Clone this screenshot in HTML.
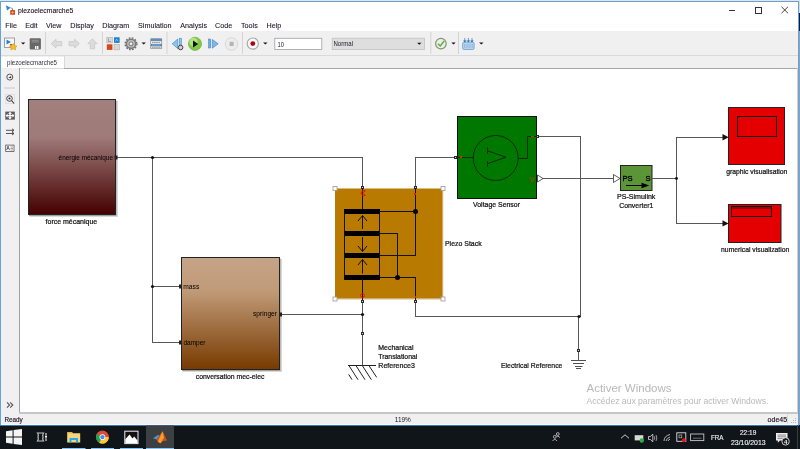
<!DOCTYPE html>
<html><head><meta charset="utf-8">
<style>
html,body{margin:0;padding:0;}
body{width:800px;height:449px;overflow:hidden;position:relative;background:#fff;font-family:"Liberation Sans",sans-serif;}
svg{position:absolute;left:0;top:0;will-change:transform;}
text{font-family:"Liberation Sans",sans-serif;}
</style></head>
<body>
<svg width="800" height="449" viewBox="0 0 800 449" shape-rendering="crispEdges">
<defs>
<linearGradient id="gForce" x1="0" y1="0" x2="0" y2="1">
<stop offset="0" stop-color="#a2807e"/><stop offset="0.33" stop-color="#9e7a78"/><stop offset="1" stop-color="#440000"/>
</linearGradient>
<linearGradient id="gConv" x1="0" y1="0" x2="0" y2="1">
<stop offset="0" stop-color="#c6a488"/><stop offset="0.3" stop-color="#c09a78"/><stop offset="1" stop-color="#783a00"/>
</linearGradient>
</defs>

<!-- ===== window chrome ===== -->
<rect x="0" y="0" width="800" height="1" fill="#e6e3e0"/>
<rect x="799" y="1" width="1" height="12" fill="#d8d8d8"/>
<rect x="799" y="13" width="1" height="18" fill="#0c1a3c"/><rect x="799" y="31" width="1" height="394" fill="#98a0a8"/>
<rect x="0" y="1" width="799" height="1" fill="#62a2de"/>
<rect x="0" y="1" width="1" height="425" fill="#62a2de"/>
<rect x="798" y="1" width="1" height="425" fill="#62a2de"/>
<!-- title bar -->
<rect x="1" y="2" width="797" height="15" fill="#ffffff"/>
<text x="18" y="13" font-size="7.8" fill="#1a1028" stroke="#1a1028" stroke-width="0.12" textLength="55.2" lengthAdjust="spacingAndGlyphs">piezoelecmarche5</text>
<!-- window controls -->
<rect x="728.5" y="9.5" width="6" height="1" fill="#333"/>
<rect x="755" y="7" width="6" height="6" fill="none" stroke="#333" stroke-width="1"/>
<path d="M781.5 6.8 L788 13.2 M788 6.8 L781.5 13.2" stroke="#333" stroke-width="0.9" shape-rendering="geometricPrecision"/>
<!-- title icon -->
<g shape-rendering="geometricPrecision">
<path d="M6 5.2 L10.6 7.8 L7 10.5 Z" fill="#2a86d4"/>
<path d="M10.5 7.8 L12.5 8.5 V10" stroke="#777" stroke-width="0.8" fill="none"/>
<rect x="10.2" y="10" width="4.8" height="4.8" rx="0.6" fill="#d4481a"/>
<path d="M11.4 12.4 H13.8 M12.6 11.2 V13.6" stroke="#f8c8a0" stroke-width="0.7"/>
</g>
<!-- menu bar -->
<g font-size="7.2" fill="#1a1028" stroke="#1a1028" stroke-width="0.08">
<text x="5.3" y="28">File</text>
<text x="25.2" y="28">Edit</text>
<text x="46" y="28">View</text>
<text x="70.2" y="28">Display</text>
<text x="102.2" y="28">Diagram</text>
<text x="138" y="28">Simulation</text>
<text x="180.3" y="28">Analysis</text>
<text x="215" y="28">Code</text>
<text x="241" y="28">Tools</text>
<text x="266.5" y="28">Help</text>
</g>
<!-- toolbar -->
<rect x="1" y="31" width="797" height="24" fill="#f0f0f0"/>
<rect x="1" y="55" width="797" height="1" fill="#dadada"/>

<!-- toolbar icons -->
<g shape-rendering="geometricPrecision">
<!-- new model -->
<rect x="4.5" y="38" width="10" height="9.5" fill="#f8f8f8" stroke="#8a8a8a" stroke-width="0.8"/>
<path d="M6.5 39.5 L11 42 L6.5 44.5 Z" fill="#2a80d0"/>
<rect x="10" y="44" width="2" height="1.5" fill="#d04818"/>
<path d="M13.2 43.5 L15 45.8 L17 46.2 L15.3 47.7 L15.6 50 L13.2 48.8 L10.8 50 L11.2 47.7 L9.5 46.2 L11.5 45.8 Z" fill="#f2c028" stroke="#c89000" stroke-width="0.5"/>
<path d="M21 42.5 H25.3 L23.15 44.5 Z" fill="#111"/>
<!-- save -->
<rect x="29.7" y="38.2" width="11.2" height="11.3" rx="1" fill="#686868"/>
<rect x="31.5" y="39.5" width="7.5" height="3.5" fill="#7a7a7a"/>
<rect x="32" y="40.5" width="6.5" height="0.8" fill="#9a9a9a"/>
<rect x="35" y="46" width="1.5" height="3" fill="#f4f4f4"/>
<rect x="37" y="46" width="1.5" height="3" fill="#f4f4f4"/>
<!-- separators -->
<rect x="45" y="32" width="1" height="22" fill="#d4d4d4"/>
<rect x="102" y="32" width="1" height="22" fill="#d4d4d4"/>
<rect x="166.5" y="32" width="1" height="22" fill="#d4d4d4"/>
<rect x="242" y="32" width="1" height="22" fill="#d4d4d4"/>
<rect x="430.3" y="32" width="1" height="22" fill="#d4d4d4"/>
<rect x="458" y="32" width="1" height="22" fill="#d4d4d4"/>
<!-- back / fwd / up -->
<path d="M51.2 43.6 L56 39.2 V41.5 H61.8 V45.8 H56 V48 Z" fill="#dcdcdc" stroke="#c4c4c4" stroke-width="0.7"/>
<path d="M79.4 43.6 L74.6 39.2 V41.5 H69 V45.8 H74.6 V48 Z" fill="#dcdcdc" stroke="#c4c4c4" stroke-width="0.7"/>
<path d="M92.4 38.8 L97 43.6 H94.6 V48.8 H90.2 V43.6 H87.8 Z" fill="#dcdcdc" stroke="#c4c4c4" stroke-width="0.7"/>
<!-- library browser -->
<rect x="106.8" y="37.3" width="5.6" height="5.6" fill="#d8d8d8" stroke="#a8a8a8" stroke-width="0.5"/>
<rect x="114" y="37.3" width="5.6" height="5.6" fill="#1f7ec8"/>
<rect x="106.8" y="44.3" width="5.6" height="5.6" fill="#d4481a"/>
<rect x="114" y="44.3" width="5.6" height="5.6" fill="#d8d8d8" stroke="#a8a8a8" stroke-width="0.5"/>
<path d="M108.5 38.5 V41.5 H111" stroke="#777" stroke-width="0.6" fill="none"/>
<path d="M115.5 41.5 L116.5 39 L118 41" stroke="#cfe4f6" stroke-width="0.6" fill="none"/>
<!-- gear -->
<circle cx="131" cy="43.8" r="5.4" fill="#7a7a7a"/>
<circle cx="131" cy="43.8" r="5.9" fill="none" stroke="#6a6a6a" stroke-width="1.3" stroke-dasharray="1.7 1.4"/>
<circle cx="131" cy="43.8" r="3.8" fill="#c4c4c4"/>
<circle cx="131" cy="43.8" r="2.6" fill="#8a8a8a"/>
<circle cx="131" cy="43.8" r="1.3" fill="#f4f4f4"/>
<path d="M141.5 42.5 H145.9 L143.7 44.5 Z" fill="#111"/>
<!-- model explorer -->
<rect x="150.3" y="38.2" width="11.8" height="10.8" rx="0.8" fill="#8a8a8a"/>
<rect x="151" y="39" width="10.4" height="1.8" fill="#5a90c8"/>
<rect x="151" y="41.2" width="10.4" height="2.6" fill="#f4f6f8"/>
<rect x="151" y="44" width="10.4" height="2" fill="#4a88c8"/>
<rect x="151" y="46.2" width="10.4" height="2.2" fill="#d8dadc"/>
<path d="M152 42.5 H160.5" stroke="#555" stroke-width="0.6" stroke-dasharray="1.6 0.5"/>
<path d="M152 45 H160.5" stroke="#d8e8f8" stroke-width="0.5" stroke-dasharray="1.6 0.5"/>
<path d="M152 47.3 H160.5" stroke="#777" stroke-width="0.6" stroke-dasharray="1.6 0.5"/>
<!-- step back -->
<path d="M172.2 43.8 L177.8 39 V48.6 Z" fill="#8cc4ec" stroke="#3a80c0" stroke-width="0.6"/>
<rect x="179.4" y="38.2" width="2" height="7.8" fill="#8cc4ec" stroke="#3a80c0" stroke-width="0.5"/>
<circle cx="180.6" cy="47.5" r="2.3" fill="#d0d0d0" stroke="#333" stroke-width="0.9"/>
<!-- run -->
<circle cx="195" cy="43.8" r="6.6" fill="#84c848" stroke="#62a838" stroke-width="0.6"/>
<circle cx="193.5" cy="42" r="4.2" fill="#c8ec9a" opacity="0.7"/>
<path d="M193 40.5 L198.2 43.9 L193 47.5 Z" fill="#111"/>
<!-- step fwd -->
<rect x="208.5" y="39" width="2.2" height="9" fill="#6aaee0" stroke="#3a80c0" stroke-width="0.5"/>
<path d="M212.3 39.5 L218.2 43.8 L212.3 48.2 Z" fill="#7ab8e8" stroke="#3a80c0" stroke-width="0.6"/>
<!-- stop -->
<circle cx="231.5" cy="44" r="6.3" fill="#ececec" stroke="#d2d2d2" stroke-width="0.8"/>
<rect x="229.6" y="41.8" width="4" height="4.2" fill="#b4b4b4"/>
<!-- record -->
<circle cx="252.8" cy="43.6" r="5.6" fill="#fafafa" stroke="#a8a8a8" stroke-width="1.2"/>
<circle cx="252.8" cy="43.6" r="2.4" fill="#b00010"/>
<path d="M263.1 42.5 H267.5 L265.3 44.5 Z" fill="#111"/>
<!-- stop time box -->
<rect x="274.8" y="38.3" width="47" height="11.2" fill="#ffffff" stroke="#a0a0a0" stroke-width="0.8"/>
<text x="277.5" y="46.8" font-size="6.6" fill="#202040" textLength="6.5" lengthAdjust="spacingAndGlyphs">10</text>
<!-- mode combo -->
<rect x="332.2" y="38.2" width="92.2" height="11.4" fill="#dedede" stroke="#c2c2c2" stroke-width="0.8"/>
<text x="333.5" y="46.4" font-size="6.6" fill="#202030" textLength="19.5" lengthAdjust="spacingAndGlyphs">Normal</text>
<path d="M417.1 42.8 H421.5 L419.3 44.8 Z" fill="#111"/>
<!-- check -->
<circle cx="440.9" cy="43.6" r="5.3" fill="#ececec" stroke="#7c9868" stroke-width="1.2"/>
<path d="M438 43.8 L440.2 46 L444.2 41" stroke="#5cac38" stroke-width="1.4" fill="none"/>
<path d="M451.3 42.6 H455.7 L453.5 44.6 Z" fill="#111"/>
<!-- sim data -->
<rect x="462.6" y="42.2" width="11.6" height="7.3" rx="1.5" fill="#b6d4f0" stroke="#4a88c8" stroke-width="0.6"/>
<path d="M464 45 H473 M464 47 H473" stroke="#4a80b8" stroke-width="0.5" stroke-dasharray="1 0.6"/>
<path d="M464.8 38 V42 M468.4 38 V42 M472 38 V42" stroke="#3a70b0" stroke-width="0.7"/>
<path d="M463.5 40.5 L464.8 42.2 L466.1 40.5 M467.1 40.5 L468.4 42.2 L469.7 40.5 M470.7 40.5 L472 42.2 L473.3 40.5" fill="#2a68b0" stroke="#2a68b0" stroke-width="0.5"/>
<path d="M479.1 42.6 H483.5 L481.3 44.6 Z" fill="#111"/>
</g>
<!-- tab strip -->
<rect x="1" y="56" width="797" height="12" fill="#f0f0f0"/>
<rect x="1" y="57" width="63" height="11" fill="#ffffff"/>
<rect x="64" y="56" width="1" height="12" fill="#d8d8d8"/>
<text x="7" y="65" font-size="6.6" fill="#303040" textLength="50" lengthAdjust="spacingAndGlyphs">piezoelecmarche5</text>
<!-- left palette -->
<rect x="1" y="68" width="18" height="345" fill="#f0f0f0"/>
<!-- palette icons -->
<g shape-rendering="geometricPrecision">
<circle cx="9.8" cy="77.1" r="3" fill="#f4f4f4" stroke="#555" stroke-width="1"/>
<path d="M8.3 77.8 L11.2 75.9 V78.3 Z" fill="#333"/>
<rect x="4" y="87.5" width="11" height="1" fill="#c8c8c8"/>
<rect x="5.5" y="94.5" width="9" height="9" fill="none" stroke="#bbb" stroke-width="0.6" stroke-dasharray="1 1"/>
<circle cx="9.5" cy="98.5" r="2.8" fill="none" stroke="#333" stroke-width="0.9"/>
<circle cx="9.5" cy="98.5" r="1" fill="#222"/>
<path d="M11.5 100.5 L14 103.5" stroke="#333" stroke-width="1.1"/>
<rect x="5.3" y="111.6" width="9.5" height="8" fill="#5a5a5a"/>
<path d="M10 112.5 V118.8 M6.2 115.6 H13.8" stroke="#fff" stroke-width="1.3"/>
<path d="M8.5 114 L10 112.3 L11.5 114 M8.5 117.2 L10 118.9 L11.5 117.2 M7.6 114.1 L6 115.6 L7.6 117.1 M12.4 114.1 L14 115.6 L12.4 117.1" fill="#fff" stroke="#fff" stroke-width="0.6"/>
<path d="M6 130.3 H14 M6 133.5 H14 M12 128.8 L14 130.3 L12 131.8 M12 132 L14 133.5 L12 135" stroke="#444" stroke-width="0.9" fill="none"/>
<rect x="5.7" y="145.1" width="8.3" height="6.4" fill="#f8f8f8" stroke="#555" stroke-width="0.8"/>
<text x="6.3" y="150.3" font-size="5" font-weight="bold" fill="#333">A</text>
<path d="M10.5 147 H13 M10.5 148.5 H13 M10.5 150 H13" stroke="#555" stroke-width="0.5"/>
<path d="M7 402.3 L9.6 405 L7 407.7 M10.2 402.3 L12.8 405 L10.2 407.7" fill="none" stroke="#555" stroke-width="1.1"/>
</g>

<!-- canvas -->
<rect x="19" y="68" width="779" height="345" fill="#ffffff"/>
<rect x="64" y="68" width="734" height="1" fill="#a8a8a8"/><rect x="19" y="68" width="45" height="1" fill="#d8d8d8"/>
<rect x="19" y="68" width="1" height="345" fill="#a0a0a0"/>
<!-- status bar -->
<rect x="1" y="413" width="797" height="12" fill="#f0f0f0"/>
<rect x="19" y="412" width="779" height="2" fill="#c6c6ca"/>
<rect x="797" y="68" width="1" height="345" fill="#d0d0d4"/>
<rect x="787" y="414" width="1" height="10" fill="#dadada"/>
<rect x="1" y="424" width="797" height="1" fill="#fafafa"/>
<text x="4.4" y="421.5" font-size="7.2" fill="#1a1020" stroke="#1a1020" stroke-width="0.15" textLength="18.4" lengthAdjust="spacingAndGlyphs">Ready</text>
<text x="394.8" y="421.7" font-size="7" fill="#1a1020" textLength="16" lengthAdjust="spacingAndGlyphs">119%</text>
<text x="767.6" y="421.7" font-size="7.2" fill="#1a1020" stroke="#1a1020" stroke-width="0.15" textLength="19.6" lengthAdjust="spacingAndGlyphs">ode45</text>
<g fill="#b8b8b8"><rect x="795" y="418" width="1" height="1"/><rect x="793" y="420" width="1" height="1"/><rect x="795" y="420" width="1" height="1"/><rect x="791" y="422" width="1" height="1"/><rect x="793" y="422" width="1" height="1"/><rect x="795" y="422" width="1" height="1"/></g>
<!-- taskbar -->
<rect x="0" y="425" width="800" height="24" fill="#101519"/>
<rect x="0" y="425" width="799" height="1" fill="#3a78b8"/>
<g shape-rendering="geometricPrecision">
<!-- start -->
<path d="M6 431.2 L12.6 430.3 V436.5 H6 Z M13.6 430.1 L22 428.9 V436.5 H13.6 Z M6 437.5 H12.6 V443.7 L6 442.8 Z M13.6 437.5 H22 V445 L13.6 443.9 Z" fill="#f4f4f4"/>
<!-- task view -->
<path d="M37.5 433 Q39 435 38 437 Q39 439 37.5 441 H43.5 Q42.2 439 43 437 Q42.2 435 43.5 433 Z" fill="none" stroke="#c4c4c4" stroke-width="1.2"/>
<rect x="45" y="433" width="2" height="2" fill="#888"/>
<rect x="45" y="435.6" width="2" height="2" fill="#f4f4f4"/>
<rect x="45" y="438.2" width="2" height="2.8" fill="#888"/>
<!-- app highlight -->
<rect x="146" y="425.5" width="28" height="23.5" fill="#3d4043"/>
<rect x="62" y="448" width="23.5" height="1" fill="#86c4f2"/>
<rect x="91" y="448" width="23" height="1" fill="#86c4f2"/>
<rect x="120" y="448" width="23" height="1" fill="#86c4f2"/>
<rect x="146" y="448" width="28" height="1" fill="#86c4f2"/>
<!-- explorer -->
<path d="M67.2 432.2 H72 L73 433.2 H80.2 V442.4 H67.2 Z" fill="#f6d67a"/>
<path d="M67.2 432.2 H72 L73 433.5 H67.2 Z" fill="#e8b84a"/>
<path d="M69.5 438 H78 V442.4 H76 V440 H71.5 V442.4 H69.5 Z" fill="#2aa8f0"/>
<!-- chrome -->
<circle cx="102.4" cy="437.1" r="6.5" fill="#dd4b39"/>
<path d="M102.4 437.1 L96.8 433.9 A6.5 6.5 0 0 0 99.2 442.8 Z" fill="#1da354"/>
<path d="M102.4 437.1 L99.2 442.8 A6.5 6.5 0 0 0 108.9 437.1 Z" fill="#fcc934"/>
<circle cx="102.4" cy="437.1" r="2.9" fill="#fff"/>
<circle cx="102.4" cy="437.1" r="2.2" fill="#4a8af4"/>
<!-- photos -->
<rect x="124.8" y="431.2" width="13.2" height="12.4" fill="#111" stroke="#f0f0f0" stroke-width="1"/>
<path d="M125.3 443.1 V439.2 L129.5 434.6 L132.5 438.5 L134.2 436.5 L137.5 440.5 V443.1 Z" fill="#fff"/>
<!-- matlab -->
<path d="M153 438.2 L158.2 434.8 L160.2 437 L156.5 439.4 Z" fill="#3c9ad8"/>
<path d="M156.5 439.4 L162.6 431.3 L167 440.5 L163.2 441 L160.2 443.6 L157.8 441.7 Z" fill="#d24e1e"/>
<path d="M162.6 431.3 L164 437.5 L160.5 443.2 L157.8 441.7 Z" fill="#f4a028"/>
<!-- people -->
<g fill="none" stroke="#d0d0d0" stroke-width="0.8">
<circle cx="554.8" cy="436.8" r="1.4"/><path d="M552.5 441 Q554.8 437.8 557 441"/>
<circle cx="557.8" cy="434" r="1.4"/><path d="M556.4 436.2 Q557.8 435.5 560 437.5"/>
</g>
<!-- tray -->
<path d="M621 438.3 L625 434.8 L629 438.3" fill="none" stroke="#e0e0e0" stroke-width="0.9"/>
<rect x="634.7" y="435.2" width="8.6" height="5.2" fill="#d8d8d8"/>
<circle cx="641.8" cy="440.5" r="2.2" fill="#2ab040"/>
<path d="M648.5 436.5 H650.3 L652.8 434.2 V441.8 L650.3 439.5 H648.5 Z" fill="none" stroke="#e0e0e0" stroke-width="0.8"/>
<path d="M654.3 436.3 Q655.3 438 654.3 439.7 M656 435 Q657.6 438 656 441" fill="none" stroke="#d0d0d0" stroke-width="0.7"/>
<path d="M664 441 Q664 436 670 434.5 M666 441 Q666.5 438 670 437 M668 441 Q668.5 439.5 670 439.3" fill="none" stroke="#d8d8d8" stroke-width="0.8"/>
<rect x="676.8" y="432.8" width="9" height="8.5" fill="none" stroke="#e0e0e0" stroke-width="0.9"/>
<rect x="679" y="435" width="2.8" height="2.8" fill="none" stroke="#ccc" stroke-width="0.6"/>
<circle cx="683.8" cy="440.3" r="2" fill="#e8101c"/>
<rect x="690.6" y="434" width="13.2" height="6.6" fill="none" stroke="#c8c8c8" stroke-width="0.9"/>
<path d="M693 438.2 H701.5" stroke="#999" stroke-width="0.7"/>
<!-- notifications -->
<path d="M776 433 H787.5 V440.5 H780 L777.8 442.8 V440.5 H776 Z" fill="#f0f0f0"/>
<path d="M777.5 435 H786 M777.5 436.8 H786 M777.5 438.6 H783" stroke="#444" stroke-width="0.6"/>
<circle cx="785.6" cy="441.4" r="3.7" fill="#1a1a1a" stroke="#d8d8d8" stroke-width="0.9"/>
<text x="783.9" y="443.8" font-size="6" font-weight="bold" fill="#f4f4f4">4</text>
<rect x="797" y="425" width="1" height="24" fill="#3a3e44"/>
</g>
<g fill="#f0f0f0" stroke="#f0f0f0" stroke-width="0.15">
<text x="711" y="440.2" font-size="7.2" textLength="12.5" lengthAdjust="spacingAndGlyphs">FRA</text>
<text x="740" y="435" font-size="7.2" textLength="16.3" lengthAdjust="spacingAndGlyphs">22:19</text>
<text x="731" y="445.3" font-size="7.2" textLength="34.6" lengthAdjust="spacingAndGlyphs">23/10/2013</text>
</g>

<!-- ===== diagram ===== -->
<g shape-rendering="geometricPrecision">
<!-- force block -->
<rect x="29.5" y="101" width="88.5" height="116" fill="#d8d8d8"/><rect x="29" y="100.5" width="87.5" height="115.5" fill="#a0a0a0"/>
<rect x="28.5" y="99.5" width="87" height="115" fill="url(#gForce)" stroke="#222" stroke-width="1"/>
<!-- conv block -->
<rect x="182.5" y="259" width="99.5" height="113" fill="#d8d8d8"/><rect x="182" y="258.5" width="98.5" height="112.5" fill="#a0a0a0"/>
<rect x="181.5" y="257.5" width="98" height="112" fill="url(#gConv)" stroke="#222" stroke-width="1"/>
<!-- piezo block -->
<rect x="335.5" y="189" width="108" height="111" fill="#e8dcc8"/>
<rect x="335" y="188.5" width="107.5" height="110" fill="#b87a00"/>
<!-- voltage sensor -->
<rect x="457.5" y="116.5" width="79" height="82" fill="#007800" stroke="#111" stroke-width="1"/>
<!-- PS converter -->
<rect x="620.5" y="165.5" width="31.5" height="25" fill="#5c9438" stroke="#222" stroke-width="1"/>
<!-- scopes -->
<rect x="728.5" y="107.5" width="56" height="57" fill="#e40000" stroke="#222" stroke-width="1"/>
<rect x="728.5" y="204.5" width="52.5" height="38" fill="#e40000" stroke="#222" stroke-width="1"/>
</g>


<!-- connection lines -->
<g fill="none" stroke="#585858" stroke-width="1">
<path d="M116 157.5 H362.5 V187"/>
<path d="M152.5 157.5 V342.5 H181"/>
<path d="M152.5 286.5 H181"/>
<path d="M280 314.5 H362.5"/>
<path d="M362.5 301 V365"/>
<path d="M415.5 187 V157.5 H456"/>
<path d="M415.5 301 V316.5 H578.5 V349"/>
<path d="M537 136.5 H580.5 V316.5"/>
<path d="M540 178.5 H613"/>
<path d="M652 178.5 H676.5 V137.5 H723"/>
<path d="M676.5 178.5 V223.5 H723"/>
</g>
<g fill="#111" shape-rendering="geometricPrecision">
<circle cx="152.5" cy="157.5" r="1.6"/>
<circle cx="152.5" cy="286.5" r="1.6"/>
<circle cx="362.5" cy="314.5" r="1.6"/>
<circle cx="579" cy="316.5" r="1.6"/>
<circle cx="676.5" cy="178.5" r="1.4"/>
<path d="M722.5 134 L728.6 137.2 L722.5 140.4 Z"/>
<path d="M722.5 220.2 L728.6 223.4 L722.5 226.6 Z"/>
</g>
<!-- port markers -->
<g fill="#222" shape-rendering="geometricPrecision">
<rect x="114.5" y="155.5" width="3" height="4"/>
<rect x="179" y="284.5" width="3" height="4"/>
<rect x="179" y="340.5" width="3" height="4"/>
<rect x="279" y="312.5" width="3" height="4"/>
</g>
<g fill="#d8d8d8" stroke="#2a2a2a" stroke-width="1" shape-rendering="crispEdges">
<rect x="361.5" y="186" width="2" height="2.5"/>
<rect x="414.5" y="186" width="2" height="2.5"/>
<rect x="361.5" y="300" width="2" height="2.5"/>
<rect x="414.5" y="300" width="2" height="2.5"/>
<rect x="361.5" y="332" width="2" height="2"/>
<rect x="577.5" y="349.5" width="2" height="2"/>
<rect x="454.5" y="156.5" width="2" height="2"/>
<rect x="536.5" y="135.5" width="2" height="2"/>
</g>
<!-- selection handles -->
<g fill="#fff" stroke="#999" stroke-width="0.8" shape-rendering="geometricPrecision">
<rect x="333" y="186.5" width="4" height="4"/>
<rect x="441" y="186.5" width="4" height="4"/>
<rect x="333" y="297" width="4" height="4"/>
<rect x="441" y="297" width="4" height="4"/>
</g>
<!-- piezo internals -->
<g fill="#000">
<rect x="344" y="209" width="36" height="4.5"/>
<rect x="344" y="231" width="36" height="4.5"/>
<rect x="344" y="253" width="36" height="4.5"/>
<rect x="344" y="275" width="36" height="4.5"/>
</g>
<g fill="none" stroke="#111" stroke-width="1">
<path d="M344.5 213 V275 M379.5 213 V275"/>
<path d="M362.5 188 V209 M362.5 279 V300"/>
<path d="M380 211.5 H415.5 M415.5 188 V255.5 H380"/>
<path d="M380 233.5 H397.5 V277.5 H380 M397.5 277.5 H415.5 V300"/>
<path d="M362.5 215.5 V229 M358 221 L362.5 215.5 L367 221" shape-rendering="geometricPrecision"/>
<path d="M362.5 237 V251.5 M358 246 L362.5 251.5 L367 246" shape-rendering="geometricPrecision"/>
<path d="M362.5 259.5 V273.5 M358 265 L362.5 259.5 L367 265" shape-rendering="geometricPrecision"/>
</g>
<g fill="#000" shape-rendering="geometricPrecision">
<circle cx="415.5" cy="211.5" r="2.5"/>
<circle cx="397.5" cy="277.5" r="2.5"/>
</g>
<g fill="none" stroke="#e81800" stroke-width="1" shape-rendering="geometricPrecision">
<path d="M365.3 191 A2.6 2.6 0 1 0 365.3 195.3 M362.5 193 L365.5 190.8 M362.5 193 L365.5 195.5"/>
<ellipse cx="362.5" cy="295.5" rx="2" ry="1.8"/>
</g>
<g fill="#e02000"><rect x="414" y="193" width="2" height="1.5"/><rect x="414.5" y="296" width="1.5" height="1.5"/></g>
<!-- voltage sensor internals -->
<g fill="none" stroke="#0a2a0a" stroke-width="1" shape-rendering="geometricPrecision">
<circle cx="495.7" cy="158" r="22.5"/>
<path d="M457 157.5 H473.2"/>
<path d="M518.2 158.5 H527.5 V136.5 H537"/>
<path d="M487.5 147.2 V153.6 M487.5 161.3 V166.9 M487.5 150.8 L506 157.2 L487.5 163.7"/>
</g>
<rect x="459.5" y="156" width="2" height="2" fill="#d03000"/>
<rect x="531" y="135.5" width="3" height="1" fill="#d03000"/>
<text x="530" y="181.8" font-size="7" fill="#e03010">V</text>
<path d="M537.5 175 L543 178.5 L537.5 182 Z" fill="#fff" stroke="#333" stroke-width="0.8" shape-rendering="geometricPrecision"/>
<!-- PS converter internals -->
<path d="M613.5 174.5 L620 178.5 L613.5 182.5 Z" fill="#fff" stroke="#333" stroke-width="0.8" shape-rendering="geometricPrecision"/>
<text x="622.4" y="180.6" font-size="7.6" fill="#000" stroke="#000" stroke-width="0.3">PS</text>
<text x="645.4" y="180.6" font-size="7.6" fill="#000" stroke="#000" stroke-width="0.3">S</text>
<path d="M625.7 185.5 H643" stroke="#000" stroke-width="1"/>
<path d="M641.5 182.8 L649.3 185.5 L641.5 188.2 Z" fill="#000" shape-rendering="geometricPrecision"/>
<!-- scope internals -->
<rect x="737.5" y="116.5" width="39" height="20" fill="none" stroke="#111" stroke-width="1"/>
<rect x="731.5" y="206.5" width="39.5" height="10" fill="#e40000" stroke="#111" stroke-width="1"/>
<rect x="732" y="207" width="38.5" height="1.5" fill="#a00000"/>
<!-- ground symbols -->
<g fill="none" stroke="#222" stroke-width="1" shape-rendering="geometricPrecision">
<path d="M348 365.5 H376"/>
<path d="M349 365.7 L358 379.7 M356 365.7 L365 379.7 M362.4 365.7 L371.4 379.7 M369 365.7 L376.7 377.4 M348.7 374.4 L352 379.7"/>
<path d="M578.5 352 V360.5" stroke="#585858"/><path d="M571 360.5 H586 M573 363.5 H584 M575 366.5 H582.5 M576 368.5 H581" stroke="#505050"/>
</g>

<g font-size="6.6" fill="#000">
<text x="58.6" y="159.6" textLength="54.4" lengthAdjust="spacingAndGlyphs">énergie mécanique</text>
<text x="183.3" y="288.8" textLength="16" lengthAdjust="spacingAndGlyphs">mass</text>
<text x="183.5" y="344.5" textLength="22" lengthAdjust="spacingAndGlyphs">damper</text>
<text x="253" y="316.3" textLength="24" lengthAdjust="spacingAndGlyphs">springer</text>
</g>
<!-- labels -->
<g font-size="7.2" fill="#111" stroke="#111" stroke-width="0.22">
<text x="45.6" y="223.8" textLength="51.6" lengthAdjust="spacingAndGlyphs">force mécanique</text>
<text x="195.8" y="378.6" textLength="68.6" lengthAdjust="spacingAndGlyphs">conversation mec-elec</text>
<text x="445" y="246.1" textLength="36.6" lengthAdjust="spacingAndGlyphs">Piezo Stack</text>
<text x="473" y="207.3" textLength="47" lengthAdjust="spacingAndGlyphs">Voltage Sensor</text>
<text x="617" y="199.3" textLength="38.4" lengthAdjust="spacingAndGlyphs">PS-Simulink</text>
<text x="619.2" y="207.9" textLength="34.2" lengthAdjust="spacingAndGlyphs">Converter1</text>
<text x="726.2" y="173.5" textLength="61.2" lengthAdjust="spacingAndGlyphs">graphic visualisation</text>
<text x="721.1" y="251.5" textLength="68.2" lengthAdjust="spacingAndGlyphs">numerical visualization</text>
<text x="501" y="368.3" textLength="61.4" lengthAdjust="spacingAndGlyphs">Electrical Reference</text>
<text x="378.3" y="349.6" textLength="35.2" lengthAdjust="spacingAndGlyphs">Mechanical</text>
<text x="378.3" y="359.2" textLength="39" lengthAdjust="spacingAndGlyphs">Translational</text>
<text x="378.3" y="368.1" textLength="36.6" lengthAdjust="spacingAndGlyphs">Reference3</text>
</g>

<!-- Activer Windows watermark -->
<text x="586.5" y="392" font-size="11.5" fill="#b8b8b8">Activer Windows</text>
<text x="586.5" y="404" font-size="8.6" fill="#b8b8b8">Accédez aux paramètres pour activer Windows.</text>
</svg>
</body></html>
